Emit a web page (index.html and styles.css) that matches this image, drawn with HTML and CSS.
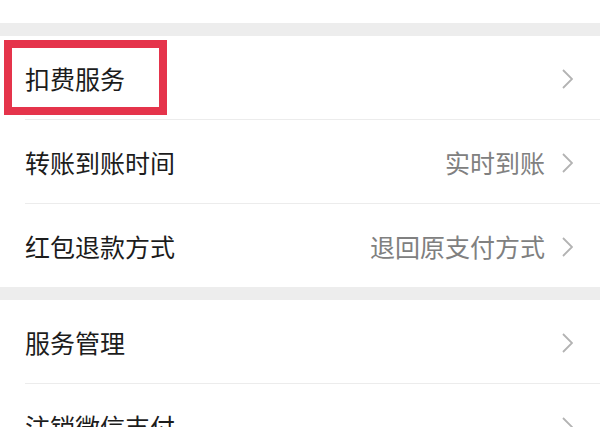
FILE: index.html
```html
<!DOCTYPE html>
<html lang="zh-CN">
<head>
<meta charset="utf-8">
<link rel="stylesheet" href="styles.css">
</head>
<body>
<div class="page">
  <div class="top-space"></div>
  <div class="band"></div>
  <div class="group">
    <div class="row row-marked">
      <div class="inner">
        <span class="label">扣费服务</span>
        <span class="right"><svg class="chev" viewBox="0 0 11 20"><path d="M1 1 L10 10 L1 19" /></svg></span>
      </div>
      <div class="mark"></div>
    </div>
    <div class="row">
      <div class="inner">
        <span class="label">转账到账时间</span>
        <span class="right"><span class="value">实时到账</span><svg class="chev" viewBox="0 0 11 20"><path d="M1 1 L10 10 L1 19" /></svg></span>
      </div>
    </div>
    <div class="row">
      <div class="inner last">
        <span class="label">红包退款方式</span>
        <span class="right"><span class="value">退回原支付方式</span><svg class="chev" viewBox="0 0 11 20"><path d="M1 1 L10 10 L1 19" /></svg></span>
      </div>
    </div>
  </div>
  <div class="band"></div>
  <div class="group">
    <div class="row">
      <div class="inner">
        <span class="label">服务管理</span>
        <span class="right"><svg class="chev" viewBox="0 0 11 20"><path d="M1 1 L10 10 L1 19" /></svg></span>
      </div>
    </div>
    <div class="row">
      <div class="inner last">
        <span class="label">注销微信支付</span>
        <span class="right"><svg class="chev" viewBox="0 0 11 20"><path d="M1 1 L10 10 L1 19" /></svg></span>
      </div>
    </div>
  </div>
</div>
</body>
</html>
```

FILE: styles.css
```css
html, body {
  margin: 0;
  padding: 0;
  background: #ffffff;
}
body {
  font-family: "Noto Sans CJK SC", "Noto Sans", sans-serif;
  overflow: hidden;
}
.page {
  width: 600px;
  height: 427px;
  overflow: hidden;
}
.top-space {
  height: 23px;
  background: #ffffff;
}
.band {
  height: 13px;
  background: #ededed;
}
.group {
  background: #ffffff;
}
.row {
  position: relative;
  padding-left: 25px;
}
.inner {
  height: 83px;
  border-bottom: 1px solid #ececec;
  display: flex;
  align-items: center;
  justify-content: space-between;
  padding-right: 27px;
  padding-top: 2px;
  box-sizing: border-box;
  height: 84px;
}
.inner.last {
  border-bottom: none;
  height: 83px;
}
.label {
  font-size: 25px;
  color: #1c1c1c;
  line-height: 1;
}
.right {
  display: flex;
  align-items: center;
}
.value {
  font-size: 25px;
  color: #808080;
  line-height: 1;
  margin-right: 17px;
}
.chev {
  width: 11px;
  height: 20px;
  display: block;
}
.chev path {
  fill: none;
  stroke: #b3b3b3;
  stroke-width: 1.8;
}
.mark {
  position: absolute;
  left: 4px;
  top: 4px;
  width: 163px;
  height: 75px;
  box-sizing: border-box;
  border: 8px solid #e5344b;
}
```
